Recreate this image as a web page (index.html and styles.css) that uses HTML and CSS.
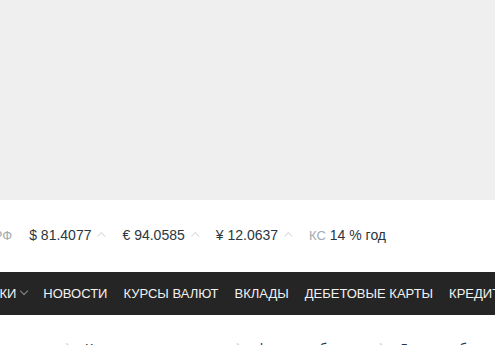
FILE: index.html
```html
<!DOCTYPE html>
<html lang="ru">
<head>
    <meta charset="UTF-8">
    <title>Курсы и новости</title>
    <link rel="stylesheet" href="styles.css">
</head>
<body>
    <div class="banner"></div>

    <div class="rates">
        <span class="rate-label">ЦБ РФ</span>
        <span class="rate">$ 81.4077<span class="arrow"></span></span>
        <span class="rate">€ 94.0585<span class="arrow"></span></span>
        <span class="rate">¥ 12.0637<span class="arrow"></span></span>
        <span class="rate"><span class="rate-label">КС</span> 14 % год</span>
    </div>

    <nav class="menu">
        <div class="menu-items">
            <a href="#">ИПОТЕКИ<span class="caret"></span></a>
            <a href="#">НОВОСТИ</a>
            <a href="#">КУРСЫ ВАЛЮТ</a>
            <a href="#">ВКЛАДЫ</a>
            <a href="#">ДЕБЕТОВЫЕ КАРТЫ</a>
            <a href="#">КРЕДИТНЫЕ КАРТЫ</a>
        </div>
    </nav>

    <div class="crumbs">
        <a href="#">главная</a>
        <span class="sep">›</span>
        <a href="#">Кредитные продукты</a>
        <span class="sep">›</span>
        <a href="#">финансы банков</a>
        <span class="sep">›</span>
        <a href="#">Деньги в банке</a>
    </div>
</body>
</html>
```

FILE: styles.css
```css
body {
    margin: 0;
    background: #fff;
    font-family: 'Liberation Sans', Arial, sans-serif;
    overflow: hidden;
}
.banner {
    height: 200px;
    background: #efefef;
}

/* Курсы валют */
.rates {
    display: flex;
    align-items: baseline;
    gap: 17px;
    margin-left: -28px;
    padding-top: 27px;
    height: 45px;
    font-size: 14px;
    color: #2a3640;
    white-space: nowrap;
}
.rate-label {
    color: #a3aab0;
    font-size: 13px;
}
.arrow {
    display: inline-block;
    width: 5px;
    height: 5px;
    margin-left: 8px;
    border-left: 1px solid #dadde0;
    border-top: 1px solid #dadde0;
    transform: rotate(45deg) translate(-1px, 0);
}

/* Меню */
.menu {
    height: 43px;
    background: #252525;
    overflow: hidden;
}
.menu-items {
    display: flex;
    align-items: center;
    gap: 16px;
    height: 100%;
    margin-left: -46px;
    white-space: nowrap;
}
.menu-items a {
    color: #f2f2f2;
    font-size: 13px;
    text-decoration: none;
}
.caret {
    display: inline-block;
    width: 5px;
    height: 5px;
    margin-left: 5px;
    border-right: 1px solid #8a8a8a;
    border-bottom: 1px solid #8a8a8a;
    transform: translateY(-4px) rotate(45deg);
}

/* Хлебные крошки */
.crumbs {
    display: flex;
    gap: 15px;
    padding: 26px 0 0 0;
    margin-left: -1px;
    font-size: 14px;
    color: #1d3a4a;
    white-space: nowrap;
}
.crumbs a {
    color: #1d3a4a;
    text-decoration: none;
}
.crumbs .sep {
    color: #c5cbd0;
    transform: translateY(-4px);
}
```
